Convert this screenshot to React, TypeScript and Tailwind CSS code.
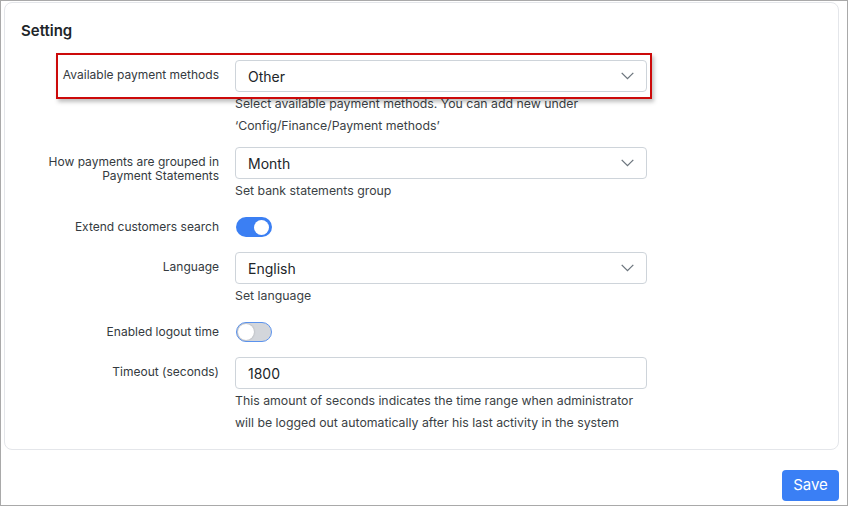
function Chevron() {
  return (
    <svg width="13" height="8" viewBox="0 0 13 8" fill="none" className="text-[#6c757d]">
      <polyline points="0.7,0.9 6.5,6.6 12.3,0.9" stroke="currentColor" strokeWidth="1.3" />
    </svg>
  )
}

function Select({ value }: { value: string }) {
  return (
    <div className="h-8 w-[412px] border border-[#ced4da] rounded bg-white flex items-center justify-between pl-3 pr-3">
      <span className="text-[14px] text-[#212529]">{value}</span>
      <Chevron />
    </div>
  )
}

function Toggle({ on }: { on: boolean }) {
  if (on) {
    return (
      <div className="w-9 h-5 rounded-full bg-[#3b7ff3] flex items-center justify-end pr-[3px]">
        <div className="w-[15px] h-[15px] rounded-full bg-white" />
      </div>
    )
  }
  return (
    <div className="w-9 h-5 rounded-full bg-[#d3d6db] border border-[#5b93ee] flex items-center pl-px">
      <div className="w-4 h-4 rounded-full bg-white shadow-[0_0_2px_rgba(0,0,0,0.25)]" />
    </div>
  )
}

function Label({ text }: { text: string }) {
  return <div className="w-[198px] shrink-0 text-right pt-2 text-[12px] leading-[14px] text-[#343a40]">{text}</div>
}

function Row({ label, children, help, className }: { label: string; children: React.ReactNode; help?: string[]; className?: string }) {
  return (
    <div className={'flex gap-4 ' + (className ?? '')}>
      <Label text={label} />
      <div className="flex flex-col">
        {children}
        {help && (
          <div className="text-[12.3px] leading-[22px] text-[#3b3f45] pt-px">
            {help.map((h) => (
              <p key={h}>{h}</p>
            ))}
          </div>
        )}
      </div>
    </div>
  )
}

function ToggleRow({ label, on, className }: { label: string; on: boolean; className?: string }) {
  return (
    <div className={'flex gap-4 h-[30px] ' + (className ?? '')}>
      <Label text={label} />
      <div className="flex items-center pl-px">
        <Toggle on={on} />
      </div>
    </div>
  )
}

export default function App() {
  return (
    <div className="w-[848px] h-[506px] border border-[#a9a9a9] bg-white pl-[3px] pr-[8px] pt-px font-['Inter',sans-serif]">
      <div className="border border-[#e4e6ea] rounded-lg px-4 pt-[18px] pb-[15px]">
        <h2 className="text-[15px] leading-5 font-semibold text-[#212529] mb-[19px]">Setting</h2>

        <div className="flex flex-col">
          {/* highlighted row */}
          <div className="relative">
            <div className="absolute left-[35px] top-[-7px] w-[596px] h-[46px] border-2 border-[#cc0a0a] shadow-[2px_3px_4px_rgba(0,0,0,0.25)] pointer-events-none" />
            <Row
              label="Available payment methods"
              help={['Select available payment methods. You can add new under', '‘Config/Finance/Payment methods’']}
            >
              <Select value="Other" />
            </Row>
          </div>

          <Row className="mt-[10px]" label="How payments are grouped in Payment Statements" help={['Set bank statements group']}>
            <Select value="Month" />
          </Row>

          <ToggleRow className="mt-[10px]" label="Extend customers search" on />

          <Row className="mt-[10px]" label="Language" help={['Set language']}>
            <Select value="English" />
          </Row>

          <ToggleRow className="mt-[10px]" label="Enabled logout time" on={false} />

          <Row
            className="mt-[10px]"
            label="Timeout (seconds)"
            help={[
              'This amount of seconds indicates the time range when administrator',
              'will be logged out automatically after his last activity in the system',
            ]}
          >
            <div className="h-8 w-[412px] border border-[#ced4da] rounded bg-white flex items-center pl-3">
              <span className="text-[14px] text-[#212529]">1800</span>
            </div>
          </Row>
        </div>
      </div>

      <div className="flex justify-end mt-5">
        <button className="h-[31px] w-[57px] rounded bg-[#3a7ff5] text-white text-[15px]">Save</button>
      </div>
    </div>
  )
}
